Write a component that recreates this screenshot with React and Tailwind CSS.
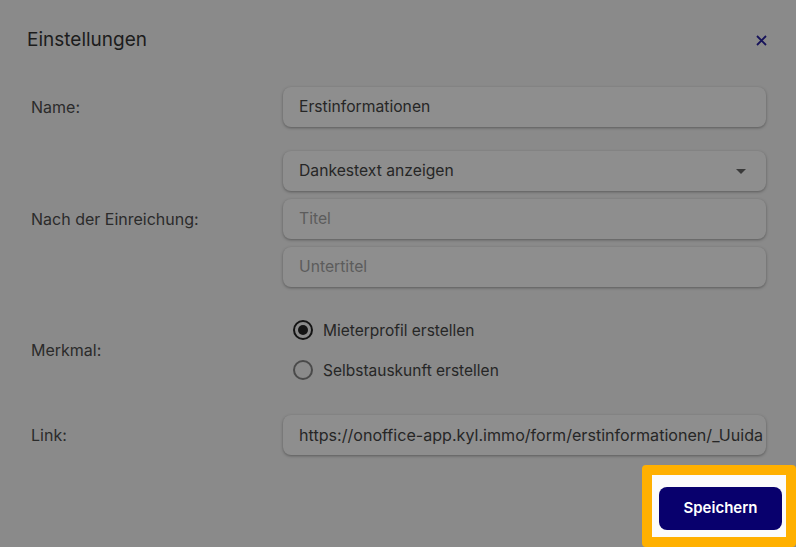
import React from "react";

function Field({ children, className = "" }) {
  return (
    <div
      className={
        "h-[40px] rounded-[8px] bg-[#8e8e8e] shadow-[0_1px_3px_rgba(0,0,0,0.35)] flex items-center pl-[16px] pr-[12px] overflow-hidden whitespace-nowrap " +
        className
      }
    >
      {children}
    </div>
  );
}

function Radio({ checked, label }) {
  return (
    <div className="h-[40px] flex items-center pl-[10px] gap-[10px]">
      <div
        className={
          "w-[20px] h-[20px] rounded-full border-2 flex items-center justify-center " +
          (checked ? "border-[#141414]" : "border-[#4a4a4a]")
        }
      >
        {checked && <div className="w-[10px] h-[10px] rounded-full bg-[#141414]" />}
      </div>
      <span className="text-[15.5px] text-[#262626] pt-[1px]">{label}</span>
    </div>
  );
}

export default function App() {
  return (
    <div
      className="w-[796px] h-[547px] bg-[#8a8a8a] overflow-hidden flex flex-col"
      style={{ fontFamily: "Inter, 'Noto Sans', sans-serif" }}
    >
      <div className="h-[80px] flex items-center justify-between pl-[27px] pr-[29px] shrink-0">
        <span className="text-[19px] text-[#1c1c1c]">Einstellungen</span>
        <svg width="11" height="11" viewBox="0 0 11 11">
          <path d="M1 1 L10 10 M10 1 L1 10" stroke="#16125a" strokeWidth="1.8" strokeLinecap="butt" />
        </svg>
      </div>

      <div className="grid grid-cols-[252px_483px] pl-[31px] mt-[7px] text-[#2b2b2b]">
        <div className="flex items-center text-[16px]">Name:</div>
        <Field className="text-[#262626] text-[15.7px]">Erstinformationen</Field>

        <div className="flex items-center text-[16px] mt-[24px]">Nach der Einreichung:</div>
        <div className="mt-[24px] flex flex-col gap-[8px]">
          <Field className="text-[#262626] text-[15.7px] justify-between">
            <span>Dankestext anzeigen</span>
            <svg width="10" height="5" viewBox="0 0 10 5" className="mr-[8px]">
              <path d="M0 0 L10 0 L5 5 Z" fill="#3a3a3a" />
            </svg>
          </Field>
          <Field className="text-[#5c5c5c] text-[15.7px]">Titel</Field>
          <Field className="text-[#5c5c5c] text-[15.7px]">Untertitel</Field>
        </div>

        <div className="flex items-center text-[16px] mt-[23px]">Merkmal:</div>
        <div className="mt-[23px] flex flex-col">
          <Radio checked label="Mieterprofil erstellen" />
          <Radio label="Selbstauskunft erstellen" />
        </div>

        <div className="flex items-center text-[16px] mt-[25px]">Link:</div>
        <Field className="mt-[25px] text-[#262626] text-[16.1px] pr-[2px]">
          https://onoffice-app.kyl.immo/form/erstinformationen/_Uuida
        </Field>
      </div>

      <div className="flex justify-end mt-[10px]">
        <div className="w-[154px] h-[82px] border-[10px] border-[#ffb000] rounded-[4px] bg-[#fbfbfb] pl-[7px] pt-[12px]">
          <button className="w-[123px] h-[43px] rounded-[8px] bg-[#08006d] text-white text-[15px] font-semibold">
            Speichern
          </button>
        </div>
      </div>
    </div>
  );
}
